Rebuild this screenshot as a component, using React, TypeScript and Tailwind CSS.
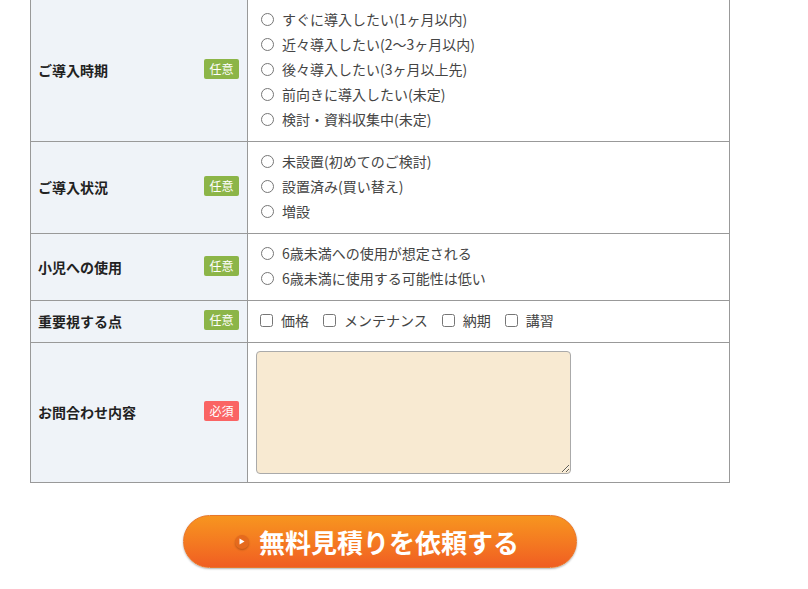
import React from 'react';

const font = { fontFamily: '"Noto Sans CJK JP", "Noto Sans", sans-serif' };

type Row = {
  label: string;
  required?: boolean;
  kind: 'radio' | 'checkbox' | 'textarea';
  name: string;
  options?: string[];
};

const rows: Row[] = [
  {
    label: 'ご導入時期',
    kind: 'radio',
    name: 'timing',
    options: [
      'すぐに導入したい(1ヶ月以内)',
      '近々導入したい(2〜3ヶ月以内)',
      '後々導入したい(3ヶ月以上先)',
      '前向きに導入したい(未定)',
      '検討・資料収集中(未定)',
    ],
  },
  {
    label: 'ご導入状況',
    kind: 'radio',
    name: 'status',
    options: ['未設置(初めてのご検討)', '設置済み(買い替え)', '増設'],
  },
  {
    label: '小児への使用',
    kind: 'radio',
    name: 'child',
    options: ['6歳未満への使用が想定される', '6歳未満に使用する可能性は低い'],
  },
  {
    label: '重要視する点',
    kind: 'checkbox',
    name: 'point',
    options: ['価格', 'メンテナンス', '納期', '講習'],
  },
  { label: 'お問合わせ内容', kind: 'textarea', name: 'message', required: true },
];

function Badge({ required }: { required?: boolean }) {
  return (
    <span
      className={`mb-[3px] inline-flex h-5 w-[35px] items-center justify-center rounded-[2px] text-[12px] leading-none text-white ${
        required ? 'bg-[#fa6464]' : 'bg-[#8cb548]'
      }`}
    >
      {required ? '必須' : '任意'}
    </span>
  );
}

export default function App() {
  return (
    <div className="min-h-[589px] bg-white text-[#333]" style={font}>
      <div className="-mt-[1px] ml-[30px] w-[700px] border-l border-r border-[#999]">
        {rows.map((row) => (
          <div key={row.name} className="flex border-t border-[#999] last:border-b">
            <div className="flex w-[217px] shrink-0 items-center justify-between border-r border-[#999] bg-[#eff3f8] pl-[7px] pr-2">
              <span className="text-[14px] font-bold text-[#222]">{row.label}</span>
              <Badge required={row.required} />
            </div>
            <div
              className={`flex-1 pl-2 text-[14px] text-[#444] ${
                row.kind === 'textarea' ? 'py-2' : 'pt-[7px] pb-[9px]'
              }`}
            >
              {row.kind === 'radio' && (
                <div className="flex flex-col">
                  {row.options!.map((opt) => (
                    <label key={opt} className="flex h-[25px] items-center">
                      <input type="radio" name={row.name} className="m-0 ml-[5px] h-[13px] w-[13px]" />
                      <span className="ml-2">{opt}</span>
                    </label>
                  ))}
                </div>
              )}
              {row.kind === 'checkbox' && (
                <div className="flex h-[25px] items-center gap-[10px]">
                  {row.options!.map((opt) => (
                    <label key={opt} className="flex items-center">
                      <input type="checkbox" name={row.name} className="m-0 ml-[4px] h-[13px] w-[13px]" />
                      <span className="ml-2">{opt}</span>
                    </label>
                  ))}
                </div>
              )}
              {row.kind === 'textarea' && (
                <textarea
                  name={row.name}
                  className="block h-[123px] w-[315px] rounded-[4px] border border-[#aaa] bg-[#f8ead2]"
                />
              )}
            </div>
          </div>
        ))}
      </div>

      <div className="flex pt-[32px] pl-[183px]">
        <button
          type="button"
          className="flex h-[53px] w-[394px] items-center justify-center rounded-full border border-[#e8762a] bg-gradient-to-b from-[#f7951f] to-[#f05d22] pr-[6px] shadow-[0_1px_2px_rgba(0,0,0,0.3)]"
        >
          <span className="mr-[10px] flex h-[14px] w-[14px] items-center justify-center rounded-full bg-[#e56a1e] shadow-[0_1px_2px_rgba(0,0,0,0.25)]">
            <svg width="6" height="7" viewBox="0 0 6 7">
              <path d="M0.5 0.5 L5.5 3.5 L0.5 6.5 Z" fill="#fff" />
            </svg>
          </span>
          <span className="text-[26px] font-bold leading-none text-white">無料見積りを依頼する</span>
        </button>
      </div>
    </div>
  );
}
